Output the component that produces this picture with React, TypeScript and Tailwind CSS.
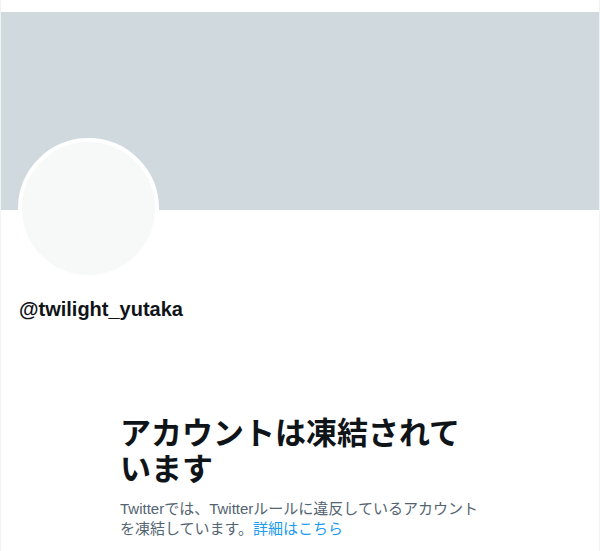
const font = "font-['Liberation_Sans','Noto_Sans_CJK_JP',sans-serif]";

function Avatar() {
  return (
    <div className="-mt-[72px] ml-[17px] h-[141px] w-[141px] rounded-full border-4 border-white bg-[#f7f9f9]" />
  );
}

function SuspendedNotice() {
  return (
    <div className="mx-auto mt-[95px] w-[360px]">
      <h2 className="text-[31px] font-bold leading-[36px] text-[#0f1419]">
        アカウントは凍結されています
      </h2>
      <p className="mt-[11px] text-[15px] leading-[20px] text-[#536471]">
        Twitterでは、Twitterルールに違反しているアカウントを凍結しています。
        <a className="text-[#1d9bf0]" href="#">
          詳細はこちら
        </a>
      </p>
    </div>
  );
}

export default function App() {
  return (
    <div className={`h-[551px] w-[600px] overflow-hidden bg-white ${font}`}>
      <div className="h-full border-x border-[#eff3f4] pt-3">
        <div className="h-[198px] bg-[#cfd9de]" />
        <Avatar />
        <div className="ml-[18px] mt-[18px] text-[20px] font-bold leading-[24px] text-[#0f1419]">
          @twilight_yutaka
        </div>
        <SuspendedNotice />
      </div>
    </div>
  );
}
